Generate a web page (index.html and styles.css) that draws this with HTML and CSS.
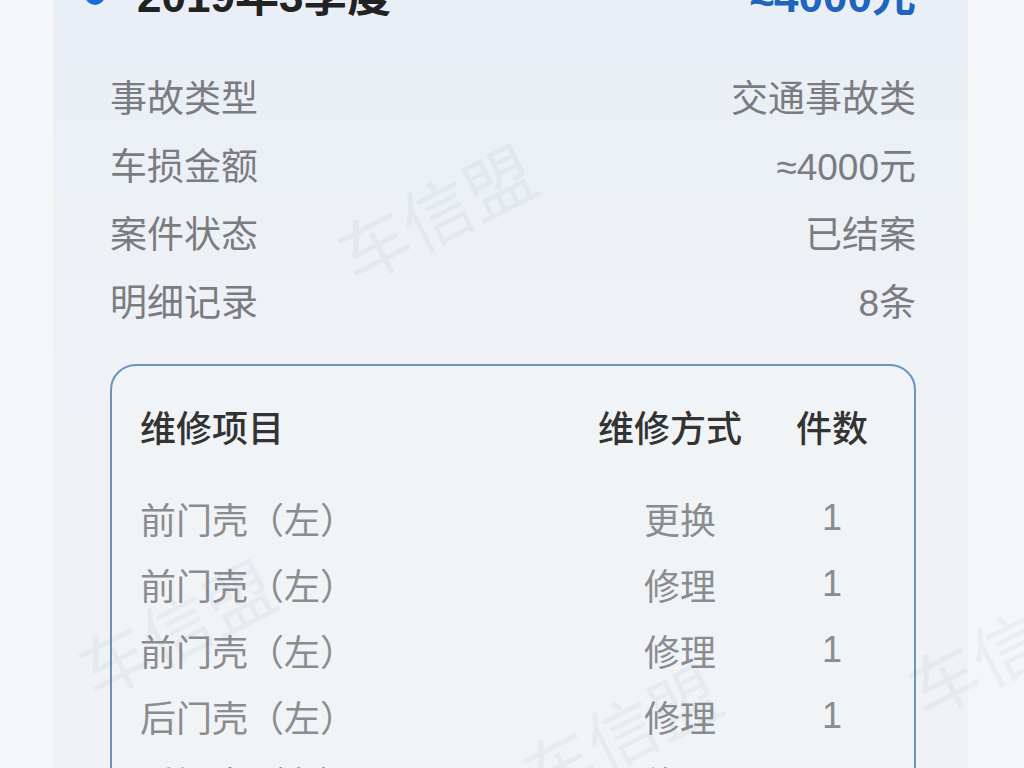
FILE: index.html
```html
<!DOCTYPE html>
<html lang="zh-CN">
<head>
    <meta charset="UTF-8">
    <meta name="viewport" content="width=device-width, initial-scale=1.0">
    <title>出险记录</title>
    <link rel="stylesheet" href="styles.css">
</head>
<body>

    <div class="page">
        <div class="record-card">

            <!-- Title -->
            <div class="record-head">
                <div class="record-title">
                    <span class="dot"></span>
                    <span>2019年3季度</span>
                </div>
                <div class="record-amount">≈4000元</div>
            </div>

            <!-- Summary rows -->
            <div class="info-list">
                <div class="info-row"><span>事故类型</span><span>交通事故类</span></div>
                <div class="info-row"><span>车损金额</span><span>≈4000元</span></div>
                <div class="info-row"><span>案件状态</span><span>已结案</span></div>
                <div class="info-row"><span>明细记录</span><span>8条</span></div>
            </div>

            <!-- Repair items -->
            <div class="repair-box">
                <div class="repair-row repair-header">
                    <span>维修项目</span>
                    <span class="col-mid">维修方式</span>
                    <span class="col-num">件数</span>
                </div>
                <div class="repair-row">
                    <span>前门壳（左）</span>
                    <span class="col-mid">更换</span>
                    <span class="col-num">1</span>
                </div>
                <div class="repair-row">
                    <span>前门壳（左）</span>
                    <span class="col-mid">修理</span>
                    <span class="col-num">1</span>
                </div>
                <div class="repair-row">
                    <span>前门壳（左）</span>
                    <span class="col-mid">修理</span>
                    <span class="col-num">1</span>
                </div>
                <div class="repair-row">
                    <span>后门壳（左）</span>
                    <span class="col-mid">修理</span>
                    <span class="col-num">1</span>
                </div>
                <div class="repair-row">
                    <span>后门壳（左）</span>
                    <span class="col-mid">修理</span>
                    <span class="col-num">1</span>
                </div>
            </div>
        </div>

        <!-- Watermarks -->
        <span class="watermark wm-1">车信盟</span>
        <span class="watermark wm-2">车信盟</span>
        <span class="watermark wm-3">车信盟</span>
        <span class="watermark wm-4">车信盟</span>
    </div>

</body>
</html>
```

FILE: styles.css
```css
body {
    margin: 0;
    height: 100vh;
    overflow: hidden;
    background: #f5f6f7;
    font-family: "Liberation Sans", "Noto Sans CJK SC", sans-serif;
}

.page {
    position: relative;
    display: flow-root;
    height: 100%;
    padding: 0 56px 0 53px;
}

.record-card {
    margin-top: -62px;
    padding: 30px 52px 0 57px;
    height: 900px;
    background: linear-gradient(180deg, #e8eef7 0%, #eef2f6 40%, #f0f3f5 100%);
}

.record-head {
    display: flex;
    justify-content: space-between;
    align-items: center;
    height: 50px;
    font-size: 44px;
    font-weight: bold;
}

.record-title {
    display: flex;
    align-items: center;
    color: #222;
    margin-left: -25px;
}

.dot {
    width: 20px;
    height: 20px;
    border-radius: 50%;
    background: #1a6bd6;
    margin: 4px 32px 0 0;
}

.record-amount {
    color: #2064bd;
}

.info-list {
    margin-top: 44px;
}

.info-row {
    display: flex;
    justify-content: space-between;
    align-items: center;
    height: 68px;
    font-size: 37px;
    color: #7a7c80;
}

.repair-box {
    margin-top: 30px;
    border: 2px solid #6b93bd;
    border-radius: 26px;
    background: #f0f4f7;
    padding: 24px 22px 0 28px;
}

.repair-row {
    display: grid;
    grid-template-columns: 1fr 160px 120px;
    column-gap: 12px;
    align-items: center;
    height: 66px;
    font-size: 36px;
    color: #8a8c90;
}

.repair-header {
    height: 72px;
    margin-bottom: 23px;
    color: #333;
    font-weight: 500;
}

.col-mid,
.col-num {
    text-align: center;
}

.repair-header .col-mid {
    margin-left: -20px;
}

/* 车信盟 watermark */
.watermark {
    position: absolute;
    font-family: "Noto Sans CJK SC", sans-serif;
    font-size: 70px;
    color: rgba(90, 100, 120, 0.06);
    transform: rotate(-27deg);
    white-space: nowrap;
    pointer-events: none;
}

.wm-1 { left: 330px; top: 160px; }
.wm-2 { left: 70px; top: 575px; }
.wm-3 { left: 515px; top: 680px; }
.wm-4 { left: 900px; top: 595px; }
```
